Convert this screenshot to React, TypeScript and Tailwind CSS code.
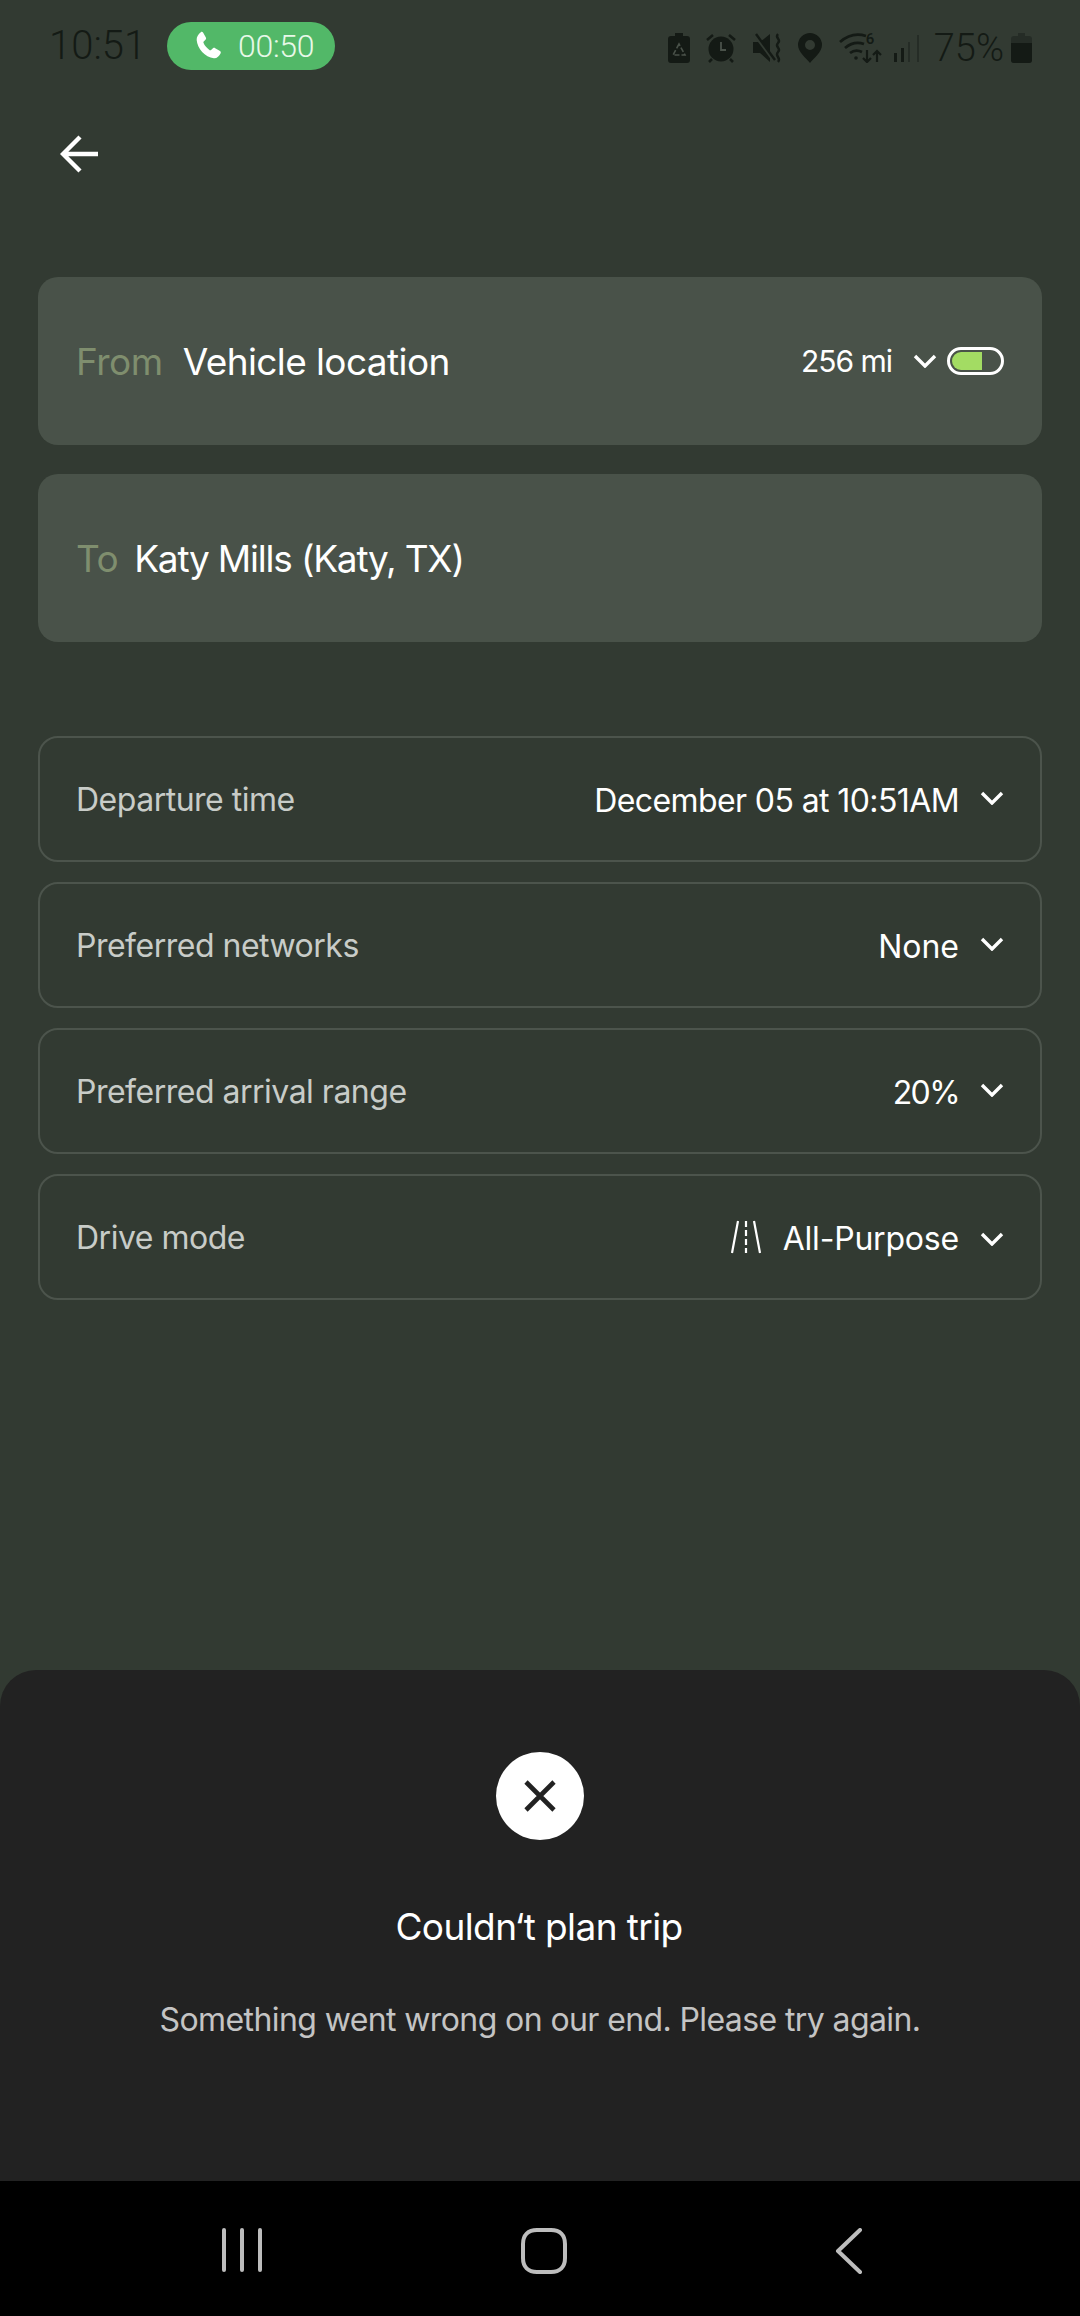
const font = "font-['Inter',sans-serif]";

function Chevron({ className = "" }: { className?: string }) {
  return (
    <svg width="24" height="14" viewBox="0 0 24 14" fill="none" className={className}>
      <path d="M2 2l10 10L22 2" stroke="#fff" strokeWidth="3.4" />
    </svg>
  );
}

function StatusIcons() {
  const ink = "#141a15";
  return (
    <div className="flex items-center">
      {/* battery saver */}
      <svg width="22" height="30" viewBox="0 0 22 30" className="mr-[16px]">
        <path d="M7 0h8v3h4a3 3 0 0 1 3 3v21a3 3 0 0 1-3 3H3a3 3 0 0 1-3-3V6a3 3 0 0 1 3-3h4z" fill={ink} />
        <path d="M11 11l-6 11h12z" fill="none" stroke="#4a524a" strokeWidth="1.6" strokeDasharray="5 2" />
      </svg>
      {/* alarm */}
      <svg width="30" height="30" viewBox="0 0 30 30" className="mr-[16px]">
        <circle cx="15" cy="16" r="12.5" fill={ink} />
        <path d="M15 9v8h5" stroke="#4a524a" strokeWidth="1.8" fill="none" />
        <path d="M1 7l6-5M29 7l-6-5M6 26l-3 3M24 26l3 3" stroke={ink} strokeWidth="2.6" />
      </svg>
      {/* mute / vibrate */}
      <svg width="31" height="30" viewBox="0 0 31 30" className="mr-[15px]">
        <path d="M1 9h7l10-8v28L8 20H1z" fill={ink} />
        <path d="M2 1l20 27" stroke="#323a32" strokeWidth="3" />
        <path d="M4 1l19 26" stroke={ink} strokeWidth="2.4" />
        <path d="M26 1c-4 4 4 5 0 9s4 5 0 9 4 6 0 10" stroke={ink} strokeWidth="2.4" fill="none" />
      </svg>
      {/* location */}
      <svg width="24" height="30" viewBox="0 0 24 30" className="mr-[17px]">
        <path fillRule="evenodd" d="M12 0a12 12 0 0 1 12 12c0 7-8 13-12 18C8 25 0 19 0 12A12 12 0 0 1 12 0zm0 7a5 5 0 1 0 0 10 5 5 0 0 0 0-10z" fill={ink} />
      </svg>
      {/* wifi with 6 and arrows */}
      <div className="relative w-[44px] h-[30px] mr-[9px]">
        <svg width="44" height="30" viewBox="0 0 44 30" className="absolute inset-0">
          <path d="M1 9c8-7 17-9 26-6M6 15c6-5 13-6 19-4M11 20c4-3 8-3 12-1" stroke={ink} strokeWidth="2.8" fill="none" />
          <circle cx="17" cy="25" r="1.8" fill={ink} />
          <path d="M28 17v12M24 25l4 4 4-4M38 29V19M34 22l4-4 4 4" stroke={ink} strokeWidth="2.2" fill="none" />
        </svg>
        <span className="absolute left-[27px] top-[-3px] text-[15px] leading-[18px] font-semibold text-[#141a15] font-['Roboto',sans-serif]">6</span>
      </div>
      {/* signal */}
      <svg width="28" height="30" viewBox="0 0 28 30" className="mr-[14px]">
        <path d="M2 20h3v9H2z" fill={ink} />
        <path d="M9 15h3v14H9z" fill={ink} />
        <path d="M16 9h2v20h-2zM25 2h2v27h-2z" fill="#252c26" />
      </svg>
      <span className="text-[38px] leading-[38px] text-[#141a15] font-['Roboto',sans-serif] font-light mr-[7px]">75%</span>
      {/* battery */}
      <svg width="21" height="30" viewBox="0 0 21 30">
        <path d="M7 0h7v3h4a3 3 0 0 1 3 3v21a3 3 0 0 1-3 3H3a3 3 0 0 1-3-3V6a3 3 0 0 1 3-3h4z" fill="#252c26" />
        <path d="M0 10h21v17a3 3 0 0 1-3 3H3a3 3 0 0 1-3-3z" fill={ink} />
      </svg>
    </div>
  );
}

function StatusBar() {
  return (
    <div className="h-[92px] flex items-start justify-between pt-[22px] pl-[49px] pr-[48px]">
      <div className="flex items-center">
        <span className="text-[40px] leading-[48px] text-[#141a15] font-['Roboto',sans-serif] font-light w-[118px]">10:51</span>
        <div className="h-[48px] w-[168px] rounded-full bg-[#52b868] flex items-center pl-[25px] gap-[14px]">
          <svg width="32" height="32" viewBox="0 0 24 24" fill="#fff">
            <path d="M6.600 1.600c.6-.4 1.400-.2 1.800.4l2 3.600c.3.600.2 1.300-.3 1.700L8.800 8.600c-.3.3-.3.600-.2 1 .9 2.200 2.600 4.200 4.700 5.500.4.200.7.200 1-.1l1.400-1.300c.5-.4 1.200-.5 1.700-.1l3.600 2.200c.6.4.8 1.200.4 1.800-1 1.900-2.700 3.800-5 3.600C9.800 20.700 3.900 13.600 3.500 7.500c-.2-2.300 1.300-4.600 3.100-5.900z" />
          </svg>
          <span className="text-[32px] leading-[48px] text-[#e8f8e8] font-['Roboto',sans-serif] font-light tracking-[-0.3px]">00:50</span>
        </div>
      </div>
      <div className="mt-[7px]">
        <StatusIcons />
      </div>
    </div>
  );
}

function LocationCard({
  label,
  value,
  valueClass,
  children,
}: {
  label: string;
  value: string;
  valueClass: string;
  children?: React.ReactNode;
}) {
  return (
    <div className="h-[168px] rounded-[20px] bg-[#495249] flex items-center justify-between pl-[38px] pr-[38px]">
      <div className="flex items-center gap-[20px] text-[37px] leading-[48px] pt-[2px]">
        <span className="text-[#7f8e6e] tracking-[-0.5px]">{label}</span>
        <span className={`text-white ${valueClass}`}>{value}</span>
      </div>
      {children}
    </div>
  );
}

function OptionRow({
  label,
  value,
  icon,
  chevronClass = "-mt-[2px]",
  valueClass = "tracking-[-0.6px]",
}: {
  label: string;
  value: string;
  icon?: React.ReactNode;
  chevronClass?: string;
  valueClass?: string;
}) {
  return (
    <div className="h-[126px] rounded-[20px] border-2 border-[#4c544c] flex items-center justify-between pl-[36px] pr-[36px]">
      <span className="text-[32px] leading-[40px] text-[#c8ccc8] tracking-[-0.5px] pt-[2px]">{label}</span>
      <div className="flex items-center">
        {icon}
        <span className={`text-[32px] leading-[40px] text-white mr-[21px] pt-[3px] ${valueClass}`}>{value}</span>
        <Chevron className={chevronClass} />
      </div>
    </div>
  );
}

export default function App() {
  return (
    <div className={`w-[1080px] h-[2316px] flex flex-col bg-[#323a32] overflow-hidden ${font}`}>
      <StatusBar />

      <div className="h-[185px] pl-[60px] pt-[43px]">
        <svg width="38" height="38" viewBox="0 0 38 38" fill="none">
          <path d="M38 19H3M20 2L3 19l17 17" stroke="#fff" strokeWidth="4.4" />
        </svg>
      </div>

      <div className="flex flex-col gap-[29px] px-[38px]">
        <LocationCard label="From" value="Vehicle location" valueClass="tracking-[-0.6px]">
          <div className="flex items-center">
            <span className="text-[30px] leading-[40px] text-white tracking-[-1px] mr-[21px]">256 mi</span>
            <Chevron className="mr-[10px]" />
            <div className="w-[57px] h-[28px] rounded-full border-[3px] border-white p-[2px] flex">
              <div className="w-[30px] h-full rounded-l-full bg-[#a3dc63]" />
            </div>
          </div>
        </LocationCard>
        <LocationCard label="To" value="Katy Mills (Katy, TX)" valueClass="tracking-[-1.2px] -ml-[4px]" />
      </div>

      <div className="flex flex-col gap-[20px] px-[38px] mt-[94px]">
        <OptionRow label="Departure time" value="December 05 at 10:51AM" />
        <OptionRow label="Preferred networks" value="None" valueClass="tracking-[0px]" />
        <OptionRow label="Preferred arrival range" value="20%" valueClass="tracking-[-1.6px]" />
        <OptionRow
          label="Drive mode"
          value="All-Purpose"
          chevronClass="mt-[3px]"
          valueClass="tracking-[-0.2px]"
          icon={
            <svg width="32" height="34" viewBox="0 0 32 34" fill="none" className="mr-[21px]">
              <path d="M8 1L2 33M30 33L24 1" stroke="#fff" strokeWidth="2.2" />
              <path d="M16 1v32" stroke="#fff" strokeWidth="2.2" strokeDasharray="6 3" />
            </svg>
          }
        />
      </div>

      {/* error sheet */}
      <div className="mt-auto h-[511px] rounded-t-[36px] bg-[#222222] flex flex-col items-center pt-[82px]">
        <div className="w-[88px] h-[88px] rounded-full bg-white flex items-center justify-center -ml-[1px]">
          <svg width="32" height="32" viewBox="0 0 32 32" fill="none">
            <path d="M2 2l28 28M30 2L2 30" stroke="#222" strokeWidth="4.6" />
          </svg>
        </div>
        <div className="mt-[63px] text-[37px] leading-[48px] text-white tracking-[-0.6px] -ml-[2px]">Couldn‘t plan trip</div>
        <div className="mt-[46px] text-[32px] leading-[46px] text-[#c4c4c4] tracking-[-0.6px]">
          Something went wrong on our end. Please try again.
        </div>
      </div>

      {/* android nav */}
      <div className="h-[135px] bg-black flex items-start pt-[47px] pl-[222px]">
        <svg width="42" height="44" viewBox="0 0 42 44" fill="none" className="mr-[257px]">
          <path d="M2 2v40M20 2v40M38 2v40" stroke="#bdbdbd" strokeWidth="4" strokeLinecap="round" />
        </svg>
        <svg width="46" height="46" viewBox="0 0 46 46" fill="none" className="mr-[268px]">
          <path d="M16 2h14c9 0 14 5 14 14v14c0 9-5 14-14 14H16C7 44 2 39 2 30V16C2 7 7 2 16 2z" stroke="#bdbdbd" strokeWidth="4" />
        </svg>
        <svg width="28" height="46" viewBox="0 0 28 46" fill="none">
          <path d="M25 2L3 23l22 21" stroke="#bdbdbd" strokeWidth="4" strokeLinecap="round" strokeLinejoin="round" />
        </svg>
      </div>
    </div>
  );
}
